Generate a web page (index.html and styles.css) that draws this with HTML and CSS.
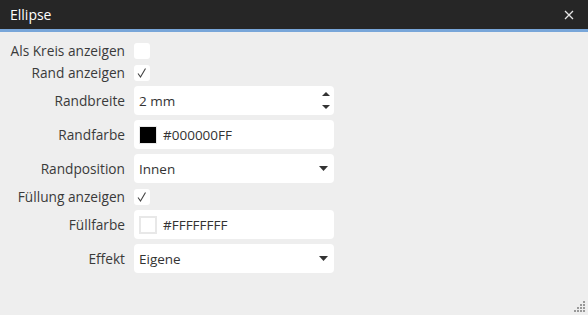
FILE: index.html
```html
<!DOCTYPE html>
<html lang="de">
<head>
    <meta charset="UTF-8">
    <title>Ellipse</title>
    <link rel="stylesheet" href="styles.css">
</head>
<body>
    <div class="dialog">
        <div class="titlebar">
            <span class="title">Ellipse</span>
            <span class="close">
                <svg width="10" height="10" viewBox="0 0 10 10"><path d="M1 1L9 9M9 1L1 9" stroke="#e6e6e6" stroke-width="1.3"/></svg>
            </span>
        </div>
        <div class="form">
            <label class="label">Als Kreis anzeigen</label>
            <div class="check-row"><span class="check"></span></div>

            <label class="label">Rand anzeigen</label>
            <div class="check-row">
                <span class="check"><svg width="16" height="16" viewBox="0 0 16 16"><path d="M4 8.5L6.5 12L11.5 3.5" fill="none" stroke="#444" stroke-width="1.1"/></svg></span>
            </div>

            <label class="label">Randbreite</label>
            <div class="field">
                <span class="value">2 mm</span>
                <span class="spin">
                    <svg width="8" height="4" viewBox="0 0 8 4"><path d="M0 4L4 0L8 4Z" fill="#333"/></svg>
                    <svg width="8" height="4" viewBox="0 0 8 4"><path d="M0 0L8 0L4 4Z" fill="#333"/></svg>
                </span>
            </div>

            <label class="label">Randfarbe</label>
            <div class="field">
                <span class="swatch black"></span>
                <span class="value">#000000FF</span>
            </div>

            <label class="label">Randposition</label>
            <div class="field">
                <span class="value">Innen</span>
                <svg class="caret" width="9" height="5" viewBox="0 0 9 5"><path d="M0 0L9 0L4.5 5Z" fill="#333"/></svg>
            </div>

            <label class="label">Füllung anzeigen</label>
            <div class="check-row">
                <span class="check"><svg width="16" height="16" viewBox="0 0 16 16"><path d="M4 8.5L6.5 12L11.5 3.5" fill="none" stroke="#444" stroke-width="1.1"/></svg></span>
            </div>

            <label class="label">Füllfarbe</label>
            <div class="field">
                <span class="swatch white"></span>
                <span class="value">#FFFFFFFF</span>
            </div>

            <label class="label">Effekt</label>
            <div class="field">
                <span class="value">Eigene</span>
                <svg class="caret" width="9" height="5" viewBox="0 0 9 5"><path d="M0 0L9 0L4.5 5Z" fill="#333"/></svg>
            </div>
        </div>
        <div class="grip">
            <svg width="12" height="12" viewBox="0 0 12 12" fill="#999">
                <rect x="9" y="0" width="2" height="2"/>
                <rect x="6" y="3" width="2" height="2"/><rect x="9" y="3" width="2" height="2"/>
                <rect x="3" y="6" width="2" height="2"/><rect x="6" y="6" width="2" height="2"/><rect x="9" y="6" width="2" height="2"/>
                <rect x="0" y="9" width="2" height="2"/><rect x="3" y="9" width="2" height="2"/><rect x="6" y="9" width="2" height="2"/><rect x="9" y="9" width="2" height="2"/>
            </svg>
        </div>
    </div>
</body>
</html>
```
FILE: styles.css
```css
body {
    margin: 0;
    font-family: "Open Sans", "Noto Sans", sans-serif;
    background: #eeeeee;
}
.dialog {
    position: relative;
    width: 588px;
    height: 315px;
    background: #eeeeee;
}
.titlebar {
    height: 29px;
    background: #262626;
    border-bottom: 3px solid #78a6d9;
    display: flex;
    align-items: center;
    justify-content: space-between;
    padding: 0 12px 0 10px;
}
.title {
    color: #ffffff;
    font-size: 14px;
}
.close {
    display: flex;
    margin-right: 2px;
}
.form {
    display: grid;
    grid-template-columns: 125px 200px;
    column-gap: 9px;
    row-gap: 5px;
    padding-top: 10px;
    align-items: center;
}
.label {
    text-align: right;
    font-size: 13.7px;
    line-height: 17px;
    color: #3a3a3a;
    white-space: nowrap;
}
.check-row {
    height: 17px;
    display: flex;
    align-items: center;
}
.check {
    width: 16px;
    height: 16px;
    background: #ffffff;
    border-radius: 3px;
    display: flex;
}
.field {
    height: 29px;
    background: #ffffff;
    border-radius: 4px;
    display: flex;
    align-items: center;
    padding: 0 5px 0 5px;
    font-size: 13.5px;
    color: #333;
}
.value {
    flex: 1;
}
.swatch {
    width: 18px;
    height: 18px;
    box-sizing: border-box;
    margin-right: 6px;
}
.swatch.black {
    background: #000;
    border: 1px solid #e8e8e8;
}
.swatch.white {
    background: #fff;
    border: 2px solid #e8e8e8;
}
.spin {
    display: flex;
    flex-direction: column;
    gap: 9px;
    margin-right: -1px;
    margin-top: -1px;
}
.caret {
    margin-right: 1px;
}
.grip {
    position: absolute;
    right: 2px;
    bottom: 2px;
    display: flex;
}
```
